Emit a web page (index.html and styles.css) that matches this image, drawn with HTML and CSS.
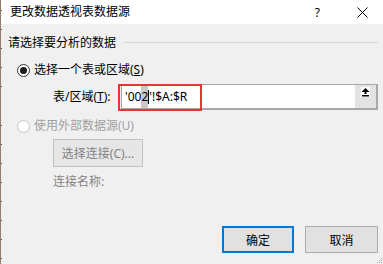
FILE: index.html
```html
<!DOCTYPE html>
<html>
  <head>
    <title>更改数据透视表数据源</title>
    <link rel="stylesheet" href="styles.css">
  </head>
  <body>
    <div class="window">
      <div class="ticks"></div>
      <div class="dialog">
        <div class="titlebar">
          <span class="title">更改数据透视表数据源</span>
          <span class="help">?</span>
          <svg class="close" width="11" height="11" viewBox="0 0 11 11">
            <path d="M0.5 0.5 L10.5 10.5 M10.5 0.5 L0.5 10.5" stroke="#000" stroke-width="1" fill="none"/>
          </svg>
        </div>

        <div class="content">
          <div class="group-head">
            <span>请选择要分析的数据</span>
            <span class="rule"></span>
          </div>

          <div class="option">
            <span class="radio checked"></span>
            <span>选择一个表或区域(<u>S</u>)</span>
          </div>

          <div class="range-row">
            <span class="range-label">表/区域(<u>T</u>):</span>
            <div class="range-box">
              <div class="range-input">'00<span class="sel">2</span><span class="caret"></span>'!$A:$R</div>
              <div class="collapse">
                <span class="collapse-icon">
                  <svg width="9" height="10" viewBox="0 0 9 10">
                    <path d="M0.5 5 L4.5 1 L8.5 5 Z" fill="#000"/>
                    <rect x="3.5" y="4.5" width="2" height="2.5" fill="#000"/>
                    <rect x="1" y="8" width="7" height="1.5" fill="#000"/>
                  </svg>
                </span>
              </div>
              <div class="mark"></div>
            </div>
          </div>

          <div class="option disabled">
            <span class="radio"></span>
            <span>使用外部数据源(U)</span>
          </div>

          <div class="sub">
            <button class="btn btn-disabled">选择连接(C)...</button>
            <div class="conn-name">连接名称:</div>
          </div>

          <div class="footer">
            <button class="btn btn-default">确定</button>
            <button class="btn">取消</button>
          </div>

          <svg class="grip" width="7" height="7" viewBox="0 0 7 7">
            <rect x="5" y="1" width="1" height="1" fill="#a0a0a0"/>
            <rect x="3" y="3" width="1" height="1" fill="#a0a0a0"/>
            <rect x="5" y="3" width="1" height="1" fill="#a0a0a0"/>
            <rect x="1" y="5" width="1" height="1" fill="#a0a0a0"/>
            <rect x="3" y="5" width="1" height="1" fill="#a0a0a0"/>
            <rect x="5" y="5" width="1" height="1" fill="#a0a0a0"/>
          </svg>
        </div>
      </div>
    </div>
  </body>
</html>
```

FILE: styles.css
```css
/* Page reset */
body {
  margin: 0;
  font-family: "Noto Sans", "Noto Sans CJK SC", sans-serif;
  font-size: 12px;
  color: #000;
}

/* Outer window with the sheet edge on the left */
.window {
  position: relative;
  width: 383px;
  height: 264px;
  display: flex;
  border-left: 1px solid #8e8163;
  box-sizing: border-box;
  overflow: hidden;
}

/* Row ticks of the sheet behind the dialog */
.ticks {
  position: absolute;
  left: 0;
  top: 0;
  width: 1px;
  height: 100%;
  background: repeating-linear-gradient(to bottom, transparent 0 10px, #4a4a4a 10px 11px, transparent 11px 19.1px);
  z-index: 2;
}

.dialog {
  flex: 1;
  display: flex;
  flex-direction: column;
}

/* Title bar */
.titlebar {
  height: 24px;
  background: #fff;
  display: flex;
  align-items: center;
  padding-left: 9px;
}

.title {
  line-height: 16px;
}

.help {
  margin-left: auto;
  margin-right: 37px;
  font-size: 12px;
}

.close {
  margin-right: 15px;
}

/* Main body */
.content {
  position: relative;
  flex: 1;
  background: #f0f0f0;
  padding: 11px 5px 11px 0;
  display: flex;
  flex-direction: column;
  line-height: 16px;
}

.group-head {
  display: flex;
  align-items: center;
  padding-left: 7px;
}

.rule {
  flex: 1;
  height: 1px;
  background: #d8d8d8;
  margin-left: 7px;
  margin-top: -2px;
}

/* Radio rows */
.option {
  display: flex;
  align-items: center;
  margin-top: 11px;
  padding-left: 16px;
}

.option.disabled {
  margin-top: 8px;
  color: #a0a0a0;
}

.radio {
  width: 13px;
  height: 13px;
  box-sizing: border-box;
  border: 1px solid #333;
  border-radius: 50%;
  background: #fff;
  margin-right: 4px;
  display: flex;
  align-items: center;
  justify-content: center;
}

.radio.checked::after {
  content: "";
  width: 7px;
  height: 7px;
  border-radius: 50%;
  background: #1a1a1a;
}

.option.disabled .radio {
  border-color: #c4c4c4;
}

/* Range input row */
.range-row {
  display: flex;
  align-items: center;
  margin-top: 6px;
  padding-left: 52px;
}

.range-label {
  width: 68px;
}

.range-box {
  position: relative;
  flex: 1;
  height: 26px;
  display: flex;
  box-sizing: border-box;
  border: 1px solid #a8a8a8;
  border-right-width: 2px;
  border-bottom-width: 2px;
  background: #fff;
}

.range-input {
  flex: 1;
  padding-left: 3px;
  line-height: 22px;
  display: flex;
  align-items: center;
}

.sel {
  background: #c8c8c8;
}

.caret {
  width: 1px;
  height: 14px;
  background: #000;
}

.collapse {
  width: 21px;
  background: #e3e3e3;
  display: flex;
  justify-content: center;
  padding-top: 2px;
}

.collapse-icon {
  width: 9px;
  height: 10px;
  background: #fff;
  display: flex;
  align-items: center;
  justify-content: center;
}

/* Red annotation box over the input */
.mark {
  position: absolute;
  left: -4px;
  top: -1px;
  width: 84px;
  height: 27px;
  box-sizing: border-box;
  border: 2px solid #e83434;
}

/* External source section */
.sub {
  padding-left: 52px;
}

.btn {
  font-family: inherit;
  font-size: 12px;
  color: #000;
  background: #e1e1e1;
  border: 1px solid #adadad;
  width: 73px;
  height: 27px;
  padding: 0;
}

.btn-disabled {
  margin-top: 5px;
  width: 90px;
  height: 28px;
  background: #e6e6e6;
  border-color: #c2c2c2;
  color: #838383;
}

.conn-name {
  margin-top: 7px;
  color: #838383;
}

/* Bottom buttons */
.footer {
  margin-top: auto;
  display: flex;
  justify-content: flex-end;
  gap: 11px;
  padding-right: 0;
}

.btn-default {
  width: 72px;
  border: 2px solid #0078d7;
}

.grip {
  position: absolute;
  right: 0;
  bottom: 0;
}
```
